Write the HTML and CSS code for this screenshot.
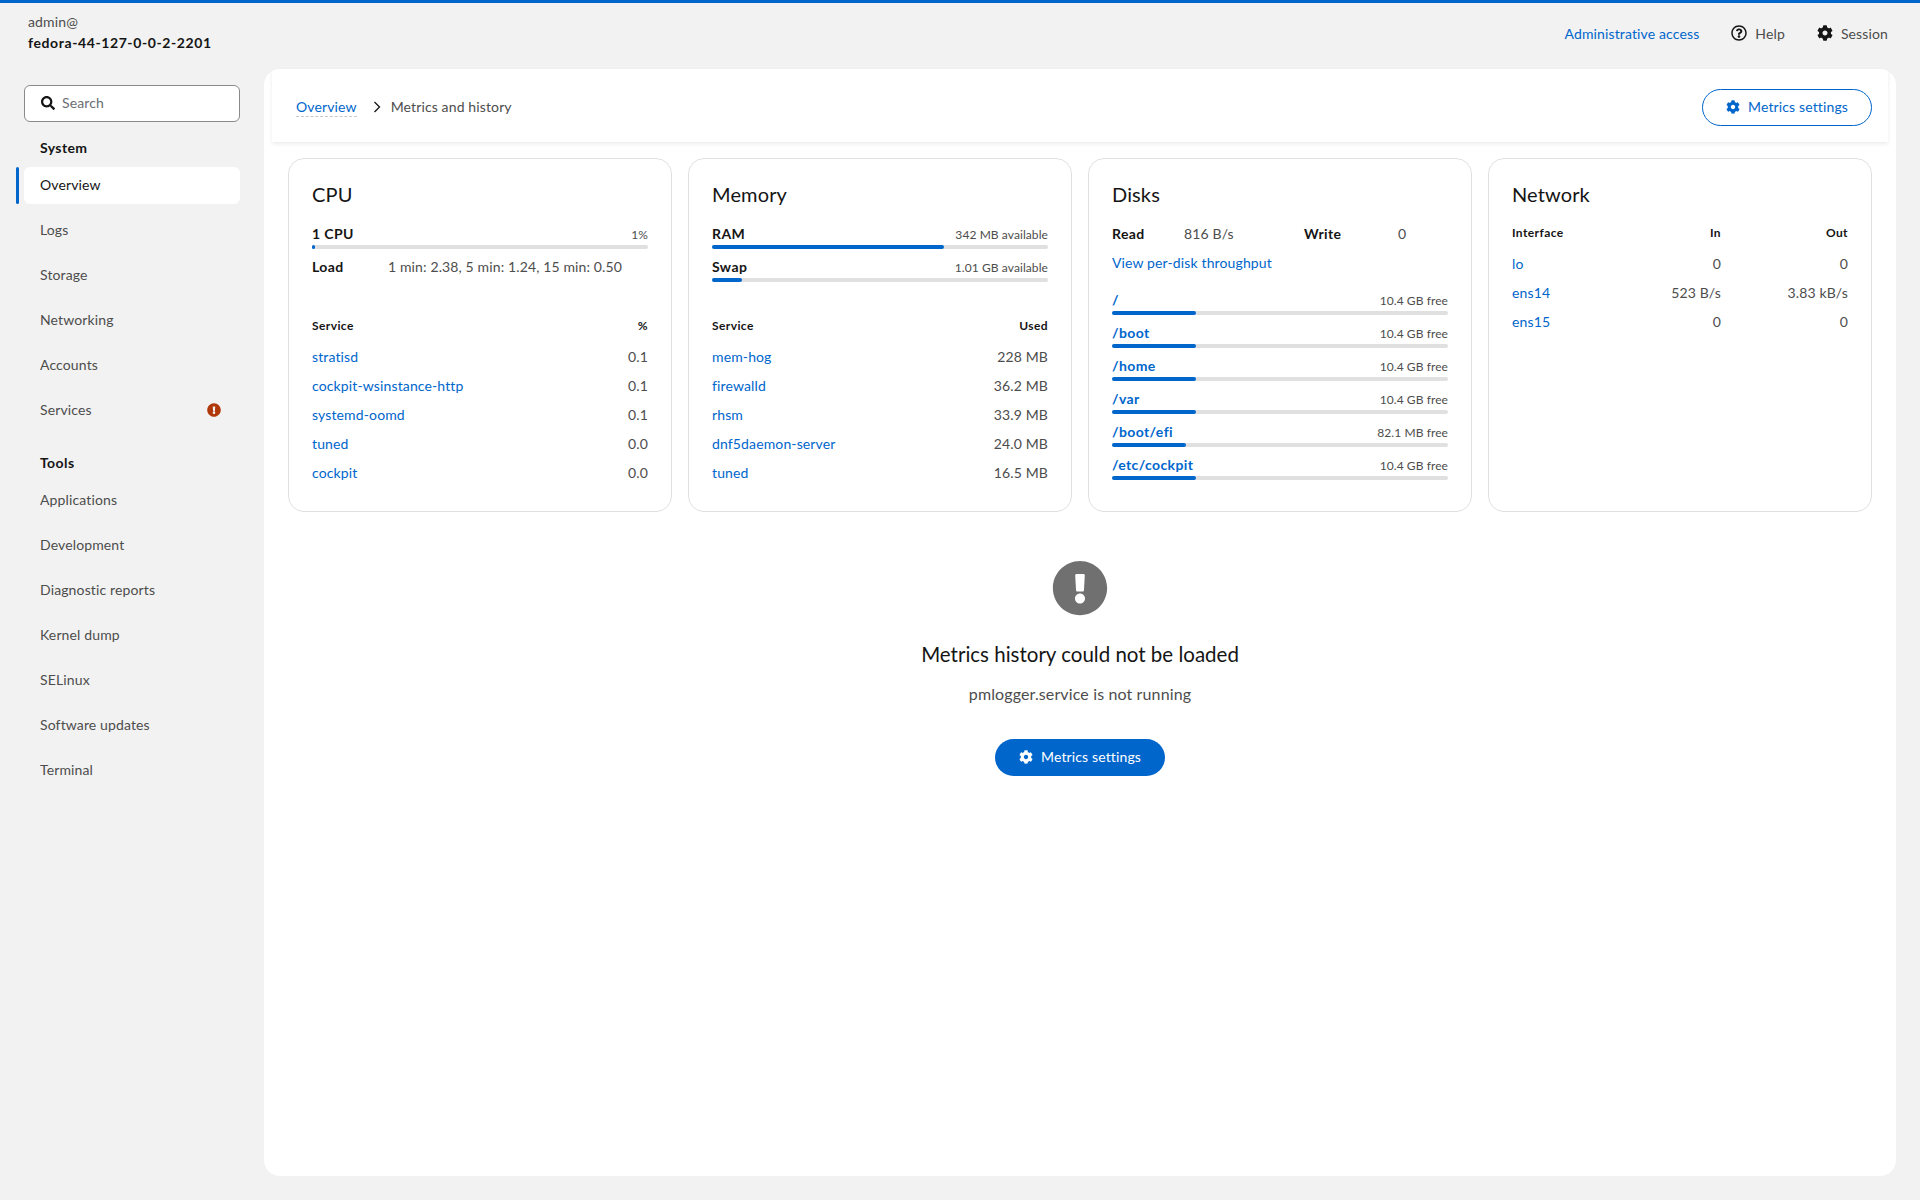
FILE: index.html
```html
<!DOCTYPE html>
<html lang="en">
<head>
  <meta charset="UTF-8">
  <title>Metrics and history</title>
  <link rel="stylesheet" href="styles.css">
</head>
<body>
  <svg class="sprites" xmlns="http://www.w3.org/2000/svg">
    <symbol id="i-cog" viewBox="0 0 512 512"><path d="M487.4 315.7l-42.6-24.6c4.3-23.2 4.3-47 0-70.2l42.6-24.6c4.9-2.8 7.1-8.6 5.5-14-11.1-35.6-30-67.8-54.7-94.6-3.8-4.1-10-5.1-14.8-2.3L380.8 110c-17.9-15.4-38.5-27.3-60.8-35.1V25.8c0-5.6-3.9-10.5-9.4-11.7-36.7-8.2-74.3-7.8-109.2 0-5.5 1.2-9.4 6.1-9.4 11.7V75c-22.2 7.9-42.8 19.8-60.8 35.1L88.7 85.5c-4.9-2.8-11-1.9-14.8 2.3-24.7 26.7-43.6 58.9-54.7 94.6-1.7 5.4.6 11.2 5.5 14L67.3 221c-4.3 23.2-4.3 47 0 70.2l-42.6 24.6c-4.9 2.8-7.1 8.6-5.5 14 11.1 35.6 30 67.8 54.7 94.6 3.8 4.1 10 5.1 14.8 2.3l42.6-24.6c17.9 15.4 38.5 27.3 60.8 35.1v49.2c0 5.6 3.9 10.5 9.4 11.7 36.7 8.2 74.3 7.8 109.2 0 5.5-1.2 9.4-6.1 9.4-11.7v-49.2c22.2-7.9 42.8-19.8 60.8-35.1l42.6 24.6c4.9 2.8 11 1.9 14.8-2.3 24.7-26.7 43.6-58.9 54.7-94.6 1.5-5.5-.7-11.3-5.6-14.1zM256 336c-44.1 0-80-35.9-80-80s35.9-80 80-80 80 35.9 80 80-35.9 80-80 80z"/></symbol>
    <symbol id="i-search" viewBox="0 0 512 512"><path d="M505 442.7L405.3 343c-4.5-4.5-10.6-7-17-7H372c27.6-35.3 44-79.7 44-128C416 93.1 322.9 0 208 0S0 93.1 0 208s93.1 208 208 208c48.3 0 92.7-16.4 128-44v16.3c0 6.4 2.5 12.5 7 17l99.7 99.7c9.4 9.4 24.6 9.4 33.9 0l28.3-28.3c9.4-9.4 9.4-24.6.1-34zM208 336c-70.7 0-128-57.2-128-128 0-70.7 57.2-128 128-128 70.7 0 128 57.2 128 128 0 70.7-57.2 128-128 128z"/></symbol>
    <symbol id="i-warn" viewBox="0 0 512 512"><path d="M504 256c0 136.997-111.043 248-248 248S8 392.997 8 256C8 119.083 119.043 8 256 8s248 111.083 248 248zm-248 50c-25.405 0-46 20.595-46 46s20.595 46 46 46 46-20.595 46-46-20.595-46-46-46zm-43.673-165.346l7.418 136c.347 6.364 5.609 11.346 11.982 11.346h48.546c6.373 0 11.635-4.982 11.982-11.346l7.418-136c.375-6.874-5.098-12.654-11.982-12.654h-63.383c-6.884 0-12.356 5.78-11.981 12.654z"/></symbol>
    <symbol id="i-help" viewBox="0 0 512 512"><path d="M256 8C119.043 8 8 119.083 8 256c0 136.997 111.043 248 248 248s248-111.003 248-248C504 119.083 392.957 8 256 8zm0 448c-110.532 0-200-89.431-200-200 0-110.495 89.472-200 200-200 110.491 0 200 89.471 200 200 0 110.53-89.431 200-200 200zm107.244-255.2c0 67.052-72.421 68.084-72.421 92.863V300c0 6.627-5.373 12-12 12h-45.647c-6.627 0-12-5.373-12-12v-8.659c0-35.745 27.1-50.034 47.579-61.516 17.561-9.845 28.324-16.541 28.324-29.579 0-17.246-21.999-28.693-39.784-28.693-23.189 0-33.894 10.977-48.942 29.969-4.057 5.12-11.46 6.071-16.666 2.124l-27.824-21.098c-5.107-3.872-6.251-11.066-2.644-16.363C184.846 131.491 214.94 112 261.794 112c49.071 0 101.45 38.304 101.45 88.8zM298 368c0 23.159-18.841 42-42 42s-42-18.841-42-42 18.841-42 42-42 42 18.841 42 42z"/></symbol>
  </svg>

  <header class="masthead">
    <div class="host">
      <div class="host-user">admin@</div>
      <div class="host-name">fedora-44-127-0-0-2-2201</div>
    </div>
    <div class="top-actions">
      <a class="link">Administrative access</a>
      <span class="top-item"><svg class="icon"><use href="#i-help"/></svg><span>Help</span></span>
      <span class="top-item"><svg class="icon"><use href="#i-cog"/></svg><span>Session</span></span>
    </div>
  </header>

  <aside class="sidebar">
    <div class="search">
      <svg class="icon search-icon"><use href="#i-search"/></svg>
      <span>Search</span>
    </div>
    <h2 class="nav-title">System</h2>
    <nav class="nav-list">
      <a class="nav-item active">Overview</a>
      <a class="nav-item">Logs</a>
      <a class="nav-item">Storage</a>
      <a class="nav-item">Networking</a>
      <a class="nav-item">Accounts</a>
      <a class="nav-item">Services<svg class="icon nav-badge"><use href="#i-warn"/></svg></a>
    </nav>
    <h2 class="nav-title tools">Tools</h2>
    <nav class="nav-list">
      <a class="nav-item">Applications</a>
      <a class="nav-item">Development</a>
      <a class="nav-item">Diagnostic reports</a>
      <a class="nav-item">Kernel dump</a>
      <a class="nav-item">SELinux</a>
      <a class="nav-item">Software updates</a>
      <a class="nav-item">Terminal</a>
    </nav>
  </aside>

  <main class="content">
    <div class="page-head">
      <div class="breadcrumb">
        <a class="link crumb-link">Overview</a>
        <svg class="crumb-sep" viewBox="0 0 8 12"><path d="M1.5 1l5 5-5 5" fill="none" stroke="#151515" stroke-width="1.3"/></svg>
        <span>Metrics and history</span>
      </div>
      <button class="btn btn-outline"><svg class="icon"><use href="#i-cog"/></svg>Metrics settings</button>
    </div>

    <section class="cards">
      <article class="card">
        <h3 class="card-title">CPU</h3>
        <div class="meter-head"><b>1 CPU</b><small>1%</small></div>
        <div class="bar"><div class="bar-fill" style="width: 1%"></div></div>
        <div class="load"><b>Load</b><span>1 min: 2.38, 5 min: 1.24, 15 min: 0.50</span></div>
        <table class="list">
          <tr><th>Service</th><th>%</th></tr>
          <tr><td><a class="link">stratisd</a></td><td>0.1</td></tr>
          <tr><td><a class="link">cockpit-wsinstance-http</a></td><td>0.1</td></tr>
          <tr><td><a class="link">systemd-oomd</a></td><td>0.1</td></tr>
          <tr><td><a class="link">tuned</a></td><td>0.0</td></tr>
          <tr><td><a class="link">cockpit</a></td><td>0.0</td></tr>
        </table>
      </article>

      <article class="card">
        <h3 class="card-title">Memory</h3>
        <div class="meter-head"><b>RAM</b><small>342 MB available</small></div>
        <div class="bar"><div class="bar-fill" style="width: 69%"></div></div>
        <div class="meter-head swap"><b>Swap</b><small>1.01 GB available</small></div>
        <div class="bar"><div class="bar-fill" style="width: 9%"></div></div>
        <table class="list mem">
          <tr><th>Service</th><th>Used</th></tr>
          <tr><td><a class="link">mem-hog</a></td><td>228 MB</td></tr>
          <tr><td><a class="link">firewalld</a></td><td>36.2 MB</td></tr>
          <tr><td><a class="link">rhsm</a></td><td>33.9 MB</td></tr>
          <tr><td><a class="link">dnf5daemon-server</a></td><td>24.0 MB</td></tr>
          <tr><td><a class="link">tuned</a></td><td>16.5 MB</td></tr>
        </table>
      </article>

      <article class="card">
        <h3 class="card-title">Disks</h3>
        <div class="io">
          <b class="io-read">Read</b><span class="io-value">816 B/s</span>
          <b class="io-write">Write</b><span>0</span>
        </div>
        <a class="link throughput">View per-disk throughput</a>
        <div class="disks">
          <div class="disk"><div class="meter-head"><a class="disk-name">/</a><small>10.4 GB free</small></div><div class="bar"><div class="bar-fill" style="width: 25%"></div></div></div>
          <div class="disk"><div class="meter-head"><a class="disk-name">/boot</a><small>10.4 GB free</small></div><div class="bar"><div class="bar-fill" style="width: 25%"></div></div></div>
          <div class="disk"><div class="meter-head"><a class="disk-name">/home</a><small>10.4 GB free</small></div><div class="bar"><div class="bar-fill" style="width: 25%"></div></div></div>
          <div class="disk"><div class="meter-head"><a class="disk-name">/var</a><small>10.4 GB free</small></div><div class="bar"><div class="bar-fill" style="width: 25%"></div></div></div>
          <div class="disk"><div class="meter-head"><a class="disk-name">/boot/efi</a><small>82.1 MB free</small></div><div class="bar"><div class="bar-fill" style="width: 22%"></div></div></div>
          <div class="disk"><div class="meter-head"><a class="disk-name">/etc/cockpit</a><small>10.4 GB free</small></div><div class="bar"><div class="bar-fill" style="width: 25%"></div></div></div>
        </div>
      </article>

      <article class="card">
        <h3 class="card-title">Network</h3>
        <table class="list net">
          <tr><th>Interface</th><th>In</th><th>Out</th></tr>
          <tr><td><a class="link">lo</a></td><td>0</td><td>0</td></tr>
          <tr><td><a class="link">ens14</a></td><td>523 B/s</td><td>3.83 kB/s</td></tr>
          <tr><td><a class="link">ens15</a></td><td>0</td><td>0</td></tr>
        </table>
      </article>
    </section>

    <section class="empty">
      <svg class="icon empty-icon"><use href="#i-warn"/></svg>
      <h2 class="empty-title">Metrics history could not be loaded</h2>
      <p class="empty-text">pmlogger.service is not running</p>
      <button class="btn btn-primary"><svg class="icon"><use href="#i-cog"/></svg>Metrics settings</button>
    </section>
  </main>
</body>
</html>
```

FILE: styles.css
```css
* {
  box-sizing: border-box;
}

body {
  margin: 0;
  height: 100vh;
  display: grid;
  grid-template-columns: 264px 1fr;
  grid-template-rows: 66px 1fr;
  border-top: 3px solid #0066cc;
  background: #f2f2f2;
  color: #151515;
  font-family: Lato, "Open Sans", sans-serif;
  font-size: 14px;
  line-height: 21px;
  letter-spacing: 0.13px;
  overflow: hidden;
}

.sprites {
  display: none;
}

.icon {
  width: 16px;
  height: 16px;
  fill: currentColor;
  flex: none;
}

.link {
  color: #0066cc;
  text-decoration: none;
}

b {
  font-weight: 700;
  letter-spacing: 0.4px;
}

small {
  font-size: 12px;
  letter-spacing: 0.08px;
  color: #4d4d4d;
}

/* top bar */
.masthead {
  grid-column: 1 / 3;
  display: flex;
  justify-content: space-between;
  padding: 8px 32px 0 28px;
}

.host-user {
  color: #4d4d4d;
}

.host-name {
  font-weight: 700;
  letter-spacing: 0.6px;
}

.top-actions {
  display: flex;
  align-items: center;
  gap: 32px;
  height: 44px;
}

.top-item {
  display: flex;
  align-items: center;
  gap: 8px;
  color: #4d4d4d;
}

.top-item .icon {
  color: #151515;
}

/* sidebar */
.sidebar {
  padding: 16px 24px 0;
}

.search {
  display: flex;
  align-items: center;
  gap: 7px;
  height: 37px;
  padding: 0 0 2px 16px;
  background: #fff;
  border: 1px solid #8a8a8a;
  border-radius: 6px;
  color: #6a6e73;
}

.search-icon {
  width: 14px;
  height: 14px;
  color: #151515;
}

.nav-title {
  margin: 15px 16px 9px;
  font-size: 14px;
  line-height: 21px;
  font-weight: 700;
  letter-spacing: 0.4px;
}

.nav-title.tools {
  margin-top: 23px;
}

.nav-list {
  display: flex;
  flex-direction: column;
  gap: 8px;
}

.nav-item {
  display: flex;
  align-items: center;
  justify-content: space-between;
  height: 37px;
  padding: 0 19px 2px 16px;
  border-radius: 6px;
  color: #4d4d4d;
  position: relative;
}

.nav-item.active {
  background: #fff;
  color: #151515;
}

.nav-item.active:before {
  content: '';
  position: absolute;
  left: -8px;
  top: 0;
  width: 3px;
  height: 100%;
  border-radius: 2px;
  background: #0066cc;
}

.nav-badge {
  width: 14px;
  height: 14px;
  color: #b1380b;
}

/* main panel */
.content {
  margin: 0 24px 24px 0;
  background: #fff;
  border-radius: 16px;
}

.page-head {
  display: flex;
  align-items: center;
  justify-content: space-between;
  height: 73px;
  margin: 0 8px;
  padding: 2px 16px 0 24px;
  box-shadow: 0 2px 4px rgba(0, 0, 0, 0.08);
}

.breadcrumb {
  display: flex;
  align-items: center;
  color: #4d4d4d;
}

.crumb-link {
  margin-top: 2px;
  border-bottom: 1px dashed #c7c7c7;
  line-height: 18px;
}

.crumb-sep {
  width: 8px;
  height: 12px;
  margin: 1px 10px 0 16px;
}

.btn {
  display: flex;
  align-items: center;
  justify-content: center;
  gap: 8px;
  width: 170px;
  height: 37px;
  border-radius: 20px;
  font: inherit;
  letter-spacing: inherit;
  padding: 0 0 2px;
}

.btn .icon {
  width: 14px;
  height: 14px;
}

.btn-outline {
  margin-top: 2px;
  background: #fff;
  border: 1px solid #0066cc;
  color: #0066cc;
}

.btn-primary {
  background: #0066cc;
  border: none;
  color: #fff;
}

/* cards */
.cards {
  display: grid;
  grid-template-columns: repeat(4, 1fr);
  gap: 16px;
  padding: 16px 24px 0;
}

.card {
  height: 354px;
  padding: 20px 23px 0;
  border: 1px solid #e0e0e0;
  border-radius: 16px;
}

.card-title {
  margin: 0 0 15px;
  font-size: 20px;
  line-height: 30px;
  font-weight: 400;
}

.meter-head {
  display: flex;
  align-items: baseline;
  justify-content: space-between;
  height: 21px;
  line-height: 19px;
}

.meter-head.swap {
  margin-top: 8px;
}

.bar {
  height: 4px;
  border-radius: 2px;
  background: #e0e0e0;
}

.bar-fill {
  height: 100%;
  border-radius: 2px;
  background: #0066cc;
}

.load {
  display: flex;
  height: 21px;
  margin-top: 8px;
  line-height: 19px;
}

.load b {
  width: 76px;
}

.load span {
  color: #4d4d4d;
}

.list {
  width: 100%;
  margin-top: 33px;
  border-collapse: collapse;
}

.list.mem {
  margin-top: 29px;
}

.list th,
.list td {
  height: 29px;
  padding: 0;
  text-align: right;
  font-weight: 400;
  color: #4d4d4d;
}

.list th {
  height: 31px;
  padding-bottom: 2px;
  font-size: 12px;
  font-weight: 700;
  letter-spacing: 0.4px;
  color: #151515;
}

.list th:first-child,
.list td:first-child {
  text-align: left;
}

.list.net {
  margin-top: -6px;
}

.list.net th:nth-child(2),
.list.net td:nth-child(2) {
  width: 104px;
}

.list.net th:nth-child(3),
.list.net td:nth-child(3) {
  width: 127px;
}

.io {
  display: flex;
  height: 21px;
  line-height: 19px;
}

.io-read {
  width: 72px;
}

.io-value {
  width: 120px;
}

.io-write {
  width: 94px;
}

.io span {
  color: #4d4d4d;
}

.throughput {
  display: block;
  margin-top: 8px;
  line-height: 20px;
}

.disks {
  margin-top: 17px;
}

.disk {
  margin-bottom: 8px;
}

.disk-name {
  color: #0066cc;
  font-weight: 700;
  letter-spacing: 0.4px;
}

/* empty state */
.empty {
  display: flex;
  flex-direction: column;
  align-items: center;
  padding-top: 49px;
}

.empty-icon {
  width: 56px;
  height: 56px;
  margin: -1px 0;
  color: #707070;
}

.empty-title {
  margin: 23px 0 0;
  font-size: 20.5px;
  line-height: 32px;
  font-weight: 400;
  letter-spacing: 0;
}

.empty-text {
  margin: 12px 0 0;
  font-size: 16px;
  line-height: 24px;
  color: #4d4d4d;
}

.empty .btn {
  margin-top: 33px;
}
```
